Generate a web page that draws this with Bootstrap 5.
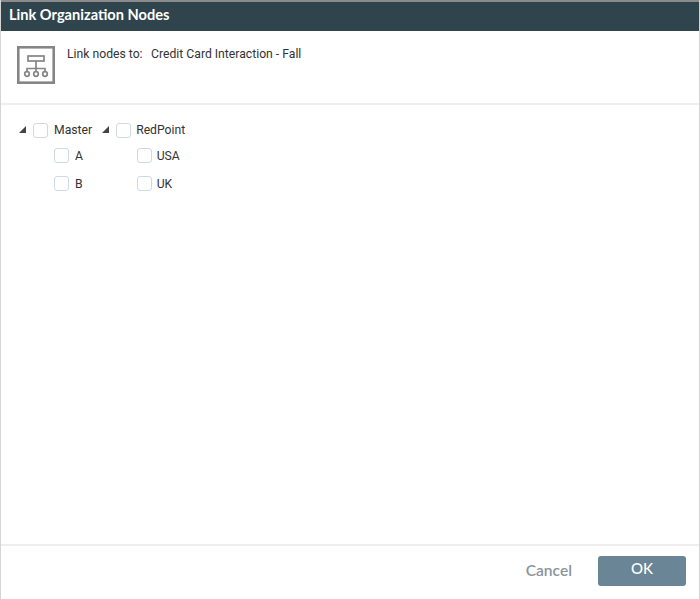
<!DOCTYPE html>
<html lang="en">
<head>
<meta charset="utf-8">
<title>Link Organization Nodes</title>
<link href="https://cdn.jsdelivr.net/npm/bootstrap@5.3.0/dist/css/bootstrap.min.css" rel="stylesheet">
<style>
html,body{height:100%;margin:0;background:#fff}
body{font-family:Roboto,"Liberation Sans",sans-serif;font-size:12.2px;color:#333;line-height:16px}
.dlg{width:700px;height:599px;border-left:1px solid #d4d4d4;border-right:1px solid #d4d4d4}
.dlg-title{height:31px;background:#2f444d;color:#fff;font-family:Lato,sans-serif;font-weight:700;font-size:14.6px;padding:0 0 3px 8px;border-top:2px solid #8b8b8b}
.dlg-info{height:74px;border-bottom:2px solid #eee;padding:15px 0 0 16px}
.org-ico{width:38px;height:38px;margin-right:12px;flex:none}
.gap-lbl{margin-right:8.5px}
.tree-area{padding:16px 0 0 18px}
.tree-col{margin-right:10px}
.tree-row{height:18px}
.arrow{width:0;height:0;border-style:solid;border-width:0 0 7px 7px;border-color:transparent transparent #444 transparent;margin-right:7px;margin-top:-1px}
.cbx{width:15px;height:15px;border:1px solid #cdd9e3;border-radius:3px;background:#fff;flex:none;margin-right:6px}
.tree-col + .tree-col .cbx{margin-right:5px}
.tree-col + .tree-col .tree-kid .cbx{margin-right:4.500px}
.tree-kids{padding-left:35px}
.tree-kid{height:18px;margin-top:10px}
.tree-kid:first-child{margin-top:7.5px}
.dlg-foot{height:55px;border-top:2px solid #eee;padding:10px 13px 0 0;font-family:Lato,sans-serif;font-size:15px}
.btn-cancel{color:#8a959c;font-weight:600;font-size:15.6px;margin-right:26px;margin-top:6px;text-decoration:none}
.btn-ok{width:88px;height:30px;background:#698596;color:#fff;border:0;border-radius:3px;font-size:15px;font-weight:500;padding:0 0 5px}
</style>
</head>
<body>
<div class="dlg d-flex flex-column">
  <div class="dlg-title d-flex align-items-center">Link Organization Nodes</div>
  <div class="dlg-info d-flex align-items-start">
    <svg class="org-ico" viewBox="0 0 38 38" fill="none" stroke="#858585">
      <rect x="1.3" y="1.3" width="35.400" height="35.400" stroke-width="2.600"/>
      <g stroke-width="1.700">
        <rect x="11" y="10" width="16" height="5"/>
        <path d="M19 15v11M10 26v-3.500h18v3.500"/>
        <circle cx="10" cy="28" r="2.300"/><circle cx="19" cy="28" r="2.300"/><circle cx="28" cy="28" r="2.300"/>
      </g>
    </svg>
    <div class="d-flex"><span class="gap-lbl">Link nodes to:</span><span>Credit Card Interaction - Fall</span></div>
  </div>
  <div class="tree-area flex-grow-1 d-flex align-items-start">
    <div class="tree-col">
      <div class="tree-row d-flex align-items-center"><span class="arrow"></span><span class="cbx"></span><span>Master</span></div>
      <div class="tree-kids">
        <div class="tree-kid d-flex align-items-center"><span class="cbx"></span>A</div>
        <div class="tree-kid d-flex align-items-center"><span class="cbx"></span>B</div>
      </div>
    </div>
    <div class="tree-col">
      <div class="tree-row d-flex align-items-center"><span class="arrow"></span><span class="cbx"></span><span>RedPoint</span></div>
      <div class="tree-kids">
        <div class="tree-kid d-flex align-items-center"><span class="cbx"></span>USA</div>
        <div class="tree-kid d-flex align-items-center"><span class="cbx"></span>UK</div>
      </div>
    </div>
  </div>
  <div class="dlg-foot d-flex justify-content-end align-items-start">
    <a class="btn-cancel" href="#">Cancel</a>
    <button class="btn btn-ok" type="button">OK</button>
  </div>
</div>
</body>
</html>
